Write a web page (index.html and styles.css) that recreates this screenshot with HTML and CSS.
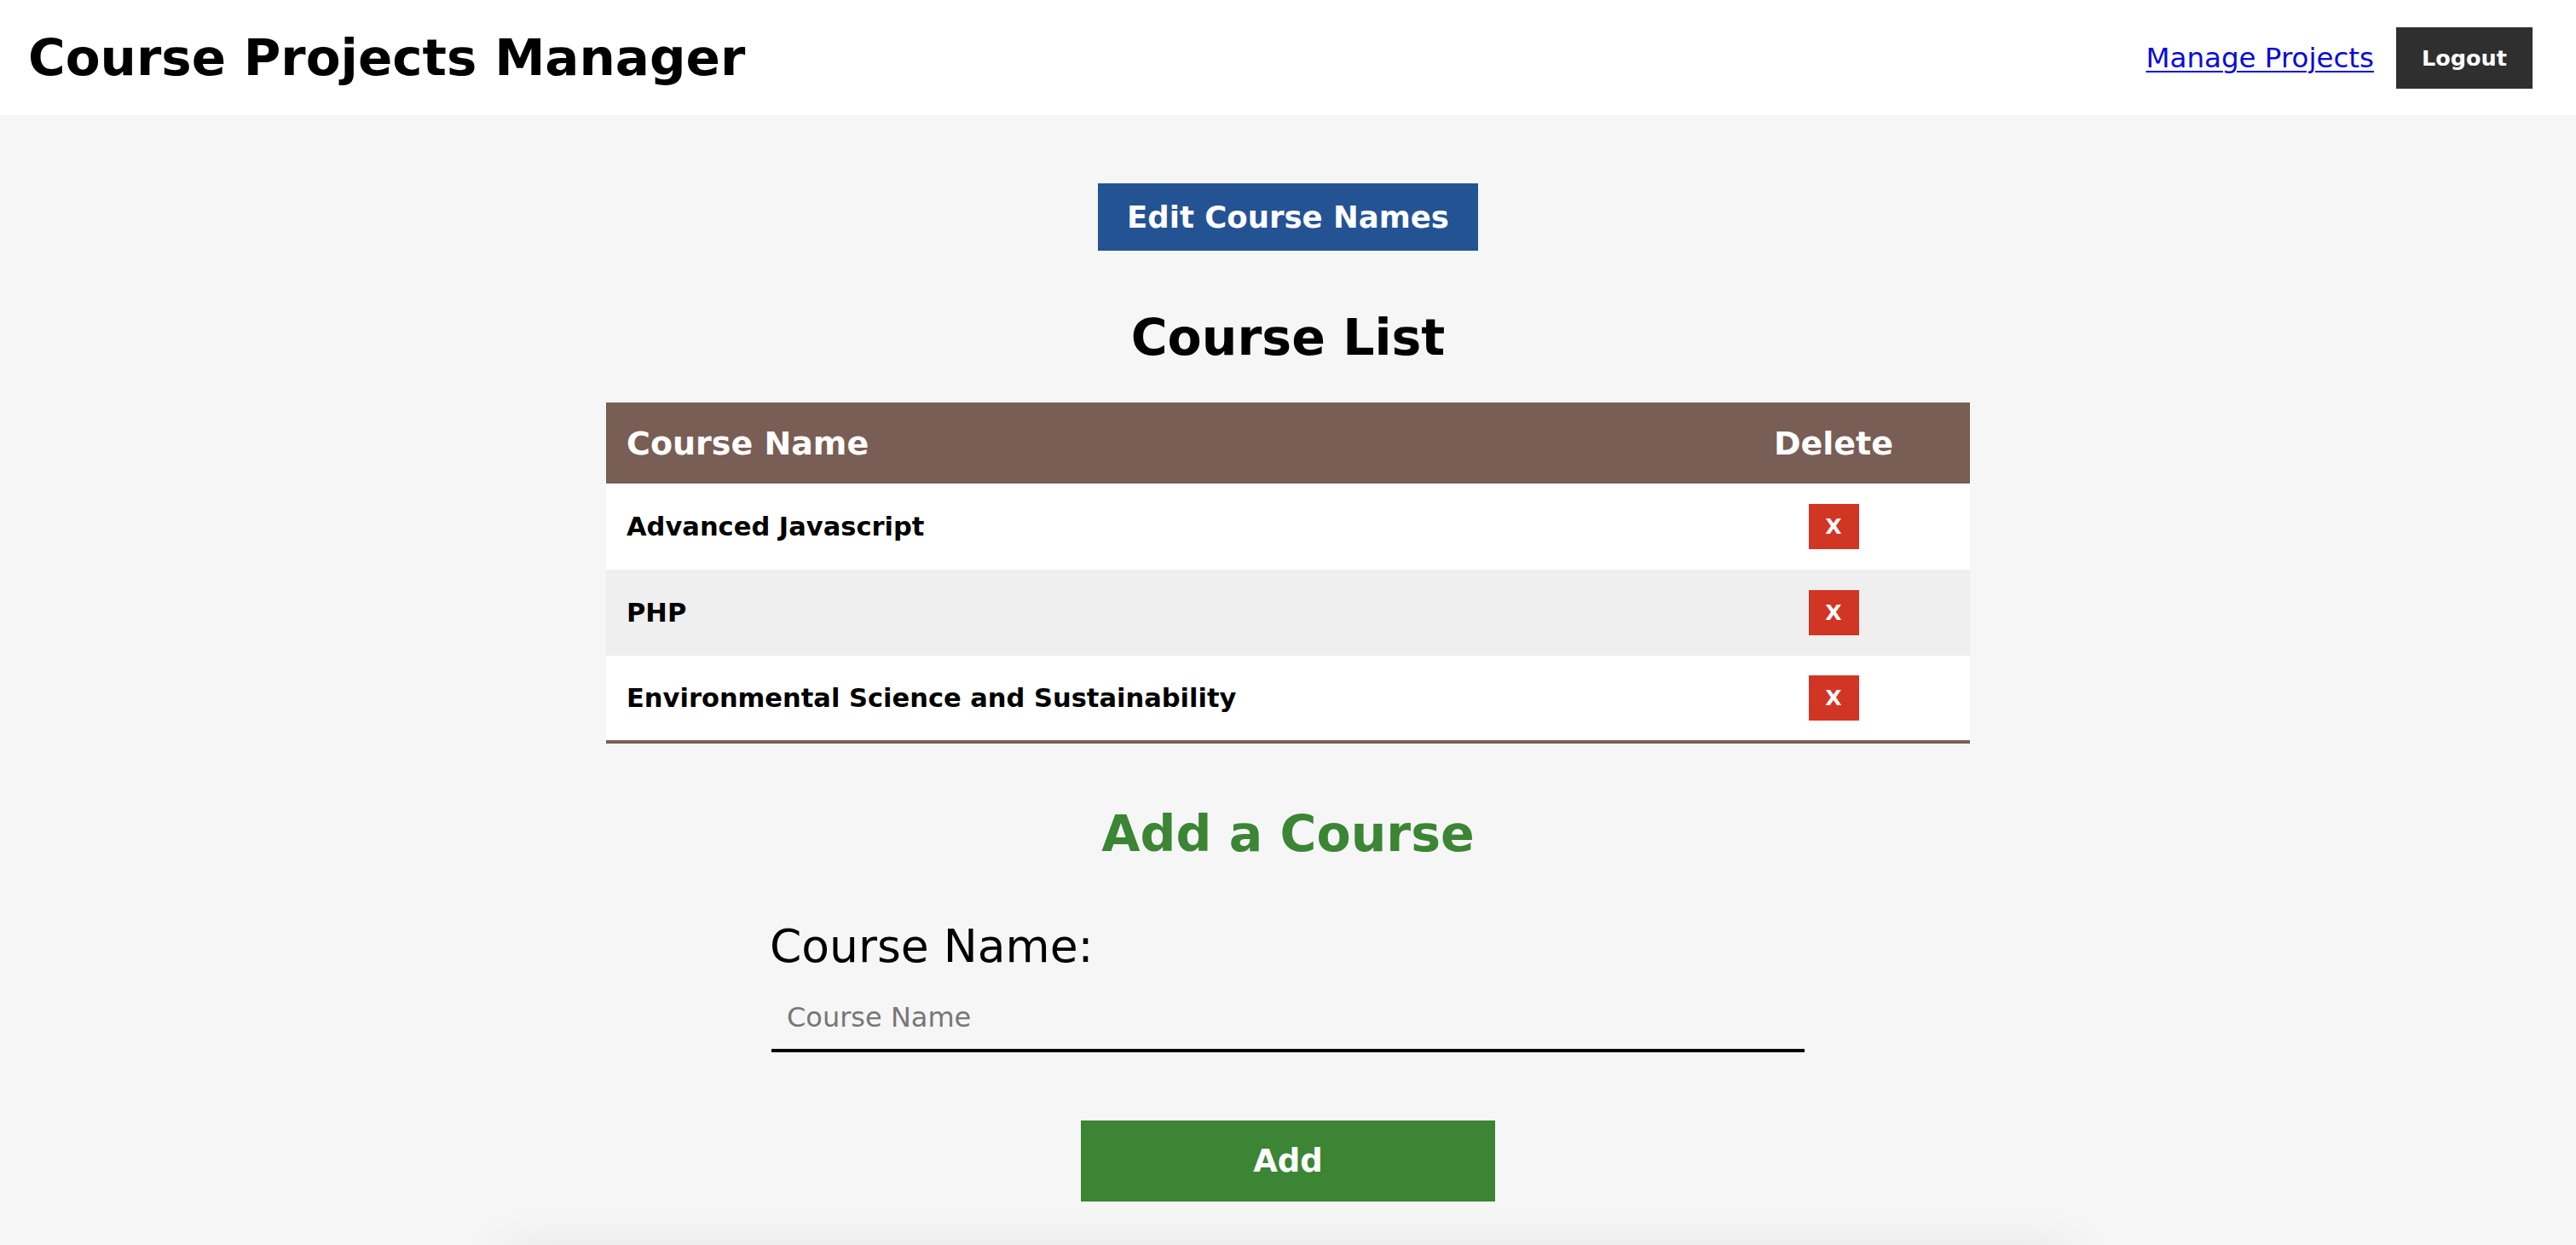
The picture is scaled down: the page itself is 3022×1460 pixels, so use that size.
FILE: index.html
```html
<!DOCTYPE html>
<html lang="en">
<head>
<meta charset="utf-8">
<title>Course Projects Manager</title>
<link rel="stylesheet" href="styles.css">
</head>
<body>
<header class="topbar">
  <h1 class="brand">Course Projects Manager</h1>
  <nav class="nav">
    <a class="nav-link" href="#">Manage Projects</a>
    <button class="btn-logout" type="button">Logout</button>
  </nav>
</header>
<main class="main">
  <button class="btn-edit" type="button">Edit Course Names</button>
  <h2 class="section-title">Course List</h2>
  <table class="course-table">
    <thead>
      <tr>
        <th class="col-name">Course Name</th>
        <th class="col-delete">Delete</th>
      </tr>
    </thead>
    <tbody>
      <tr>
        <td class="cell-name">Advanced Javascript</td>
        <td class="cell-delete"><button class="btn-delete" type="button">X</button></td>
      </tr>
      <tr>
        <td class="cell-name">PHP</td>
        <td class="cell-delete"><button class="btn-delete" type="button">X</button></td>
      </tr>
      <tr>
        <td class="cell-name">Environmental Science and Sustainability</td>
        <td class="cell-delete"><button class="btn-delete" type="button">X</button></td>
      </tr>
    </tbody>
  </table>
  <h2 class="section-title section-title-green">Add a Course</h2>
  <form class="add-form">
    <label class="form-label" for="courseName">Course Name:</label>
    <input class="form-input" id="courseName" type="text" placeholder="Course Name">
    <button class="btn-add" type="button">Add</button>
  </form>
  <div class="below-card"></div>
</main>
</body>
</html>
```
FILE: styles.css
```css
* {
  box-sizing: border-box;
}

html, body {
  margin: 0;
  padding: 0;
}

body {
  font-family: "DejaVu Sans", "Open Sans", sans-serif;
  background: #f6f6f6;
  color: #000;
  overflow: hidden;
}

.topbar {
  height: 135px;
  background: #ffffff;
  display: flex;
  align-items: center;
  justify-content: space-between;
  padding: 0 51px 0 33px;
}

.brand {
  margin: 0;
  font-size: 59.5px;
  font-weight: 700;
  line-height: 70px;
}

.nav {
  display: flex;
  align-items: center;
  gap: 26px;
}

.nav-link {
  font-size: 32.5px;
  color: #0a0ad8;
  text-decoration: underline;
  text-underline-offset: 4px;
  text-decoration-thickness: 2px;
}

.btn-logout {
  font-family: inherit;
  font-size: 25.5px;
  font-weight: 700;
  color: #ffffff;
  background: #2f2f2f;
  border: none;
  width: 160px;
  height: 72px;
  padding: 0;
}

.main {
  display: flex;
  flex-direction: column;
  align-items: center;
  padding-top: 80px;
}

.btn-edit {
  font-family: inherit;
  font-size: 35.5px;
  font-weight: 700;
  color: #ffffff;
  background: #245394;
  border: none;
  width: 446px;
  height: 79px;
  padding: 0;
}

.section-title {
  margin: 67px 0 0;
  font-size: 58.5px;
  font-weight: 700;
  line-height: 70px;
}

.section-title-green {
  color: #3b8534;
  margin-top: 71px;
}

.course-table {
  margin-top: 41px;
  width: 1600px;
  border-collapse: collapse;
  border-bottom: 4px solid #785e55;
}

.course-table th {
  background: #785e55;
  color: #ffffff;
  font-size: 38px;
  font-weight: 700;
  height: 95px;
  padding: 0 24px;
}

.col-name {
  text-align: left;
}

.col-delete {
  width: 320px;
  text-align: center;
}

.course-table td {
  height: 101px;
  padding: 0 24px;
  background: #ffffff;
}

.course-table tbody tr:nth-child(even) td {
  background: #efefef;
}

.cell-name {
  font-size: 30.5px;
  font-weight: 700;
}

.cell-delete {
  text-align: center;
}

.btn-delete {
  font-family: inherit;
  font-size: 25px;
  font-weight: 700;
  color: #ffffff;
  background: #d13524;
  border: none;
  width: 59px;
  height: 53px;
  padding: 0;
  vertical-align: middle;
}

.add-form {
  width: 1212px;
  margin-top: 66px;
  display: flex;
  flex-direction: column;
}

.form-label {
  font-size: 53.5px;
  line-height: 62px;
  margin-left: -2px;
}

.form-input {
  margin-top: 10px;
  font-family: inherit;
  font-size: 32px;
  line-height: 37px;
  padding: 24px 18px 18px;
  border: none;
  border-bottom: 4px solid #000000;
  background: transparent;
  outline: none;
}

.form-input::placeholder {
  color: #777777;
}

.btn-add {
  align-self: center;
  margin-top: 80px;
  font-family: inherit;
  font-size: 37px;
  font-weight: 700;
  color: #ffffff;
  background: #3b8534;
  border: none;
  width: 486px;
  height: 95px;
  padding: 0;
}

.below-card {
  margin-top: 56px;
  width: 1840px;
  height: 300px;
  background: #f6f6f6;
  box-shadow: 0 0 56px rgba(0, 0, 0, 0.08);
}
```
